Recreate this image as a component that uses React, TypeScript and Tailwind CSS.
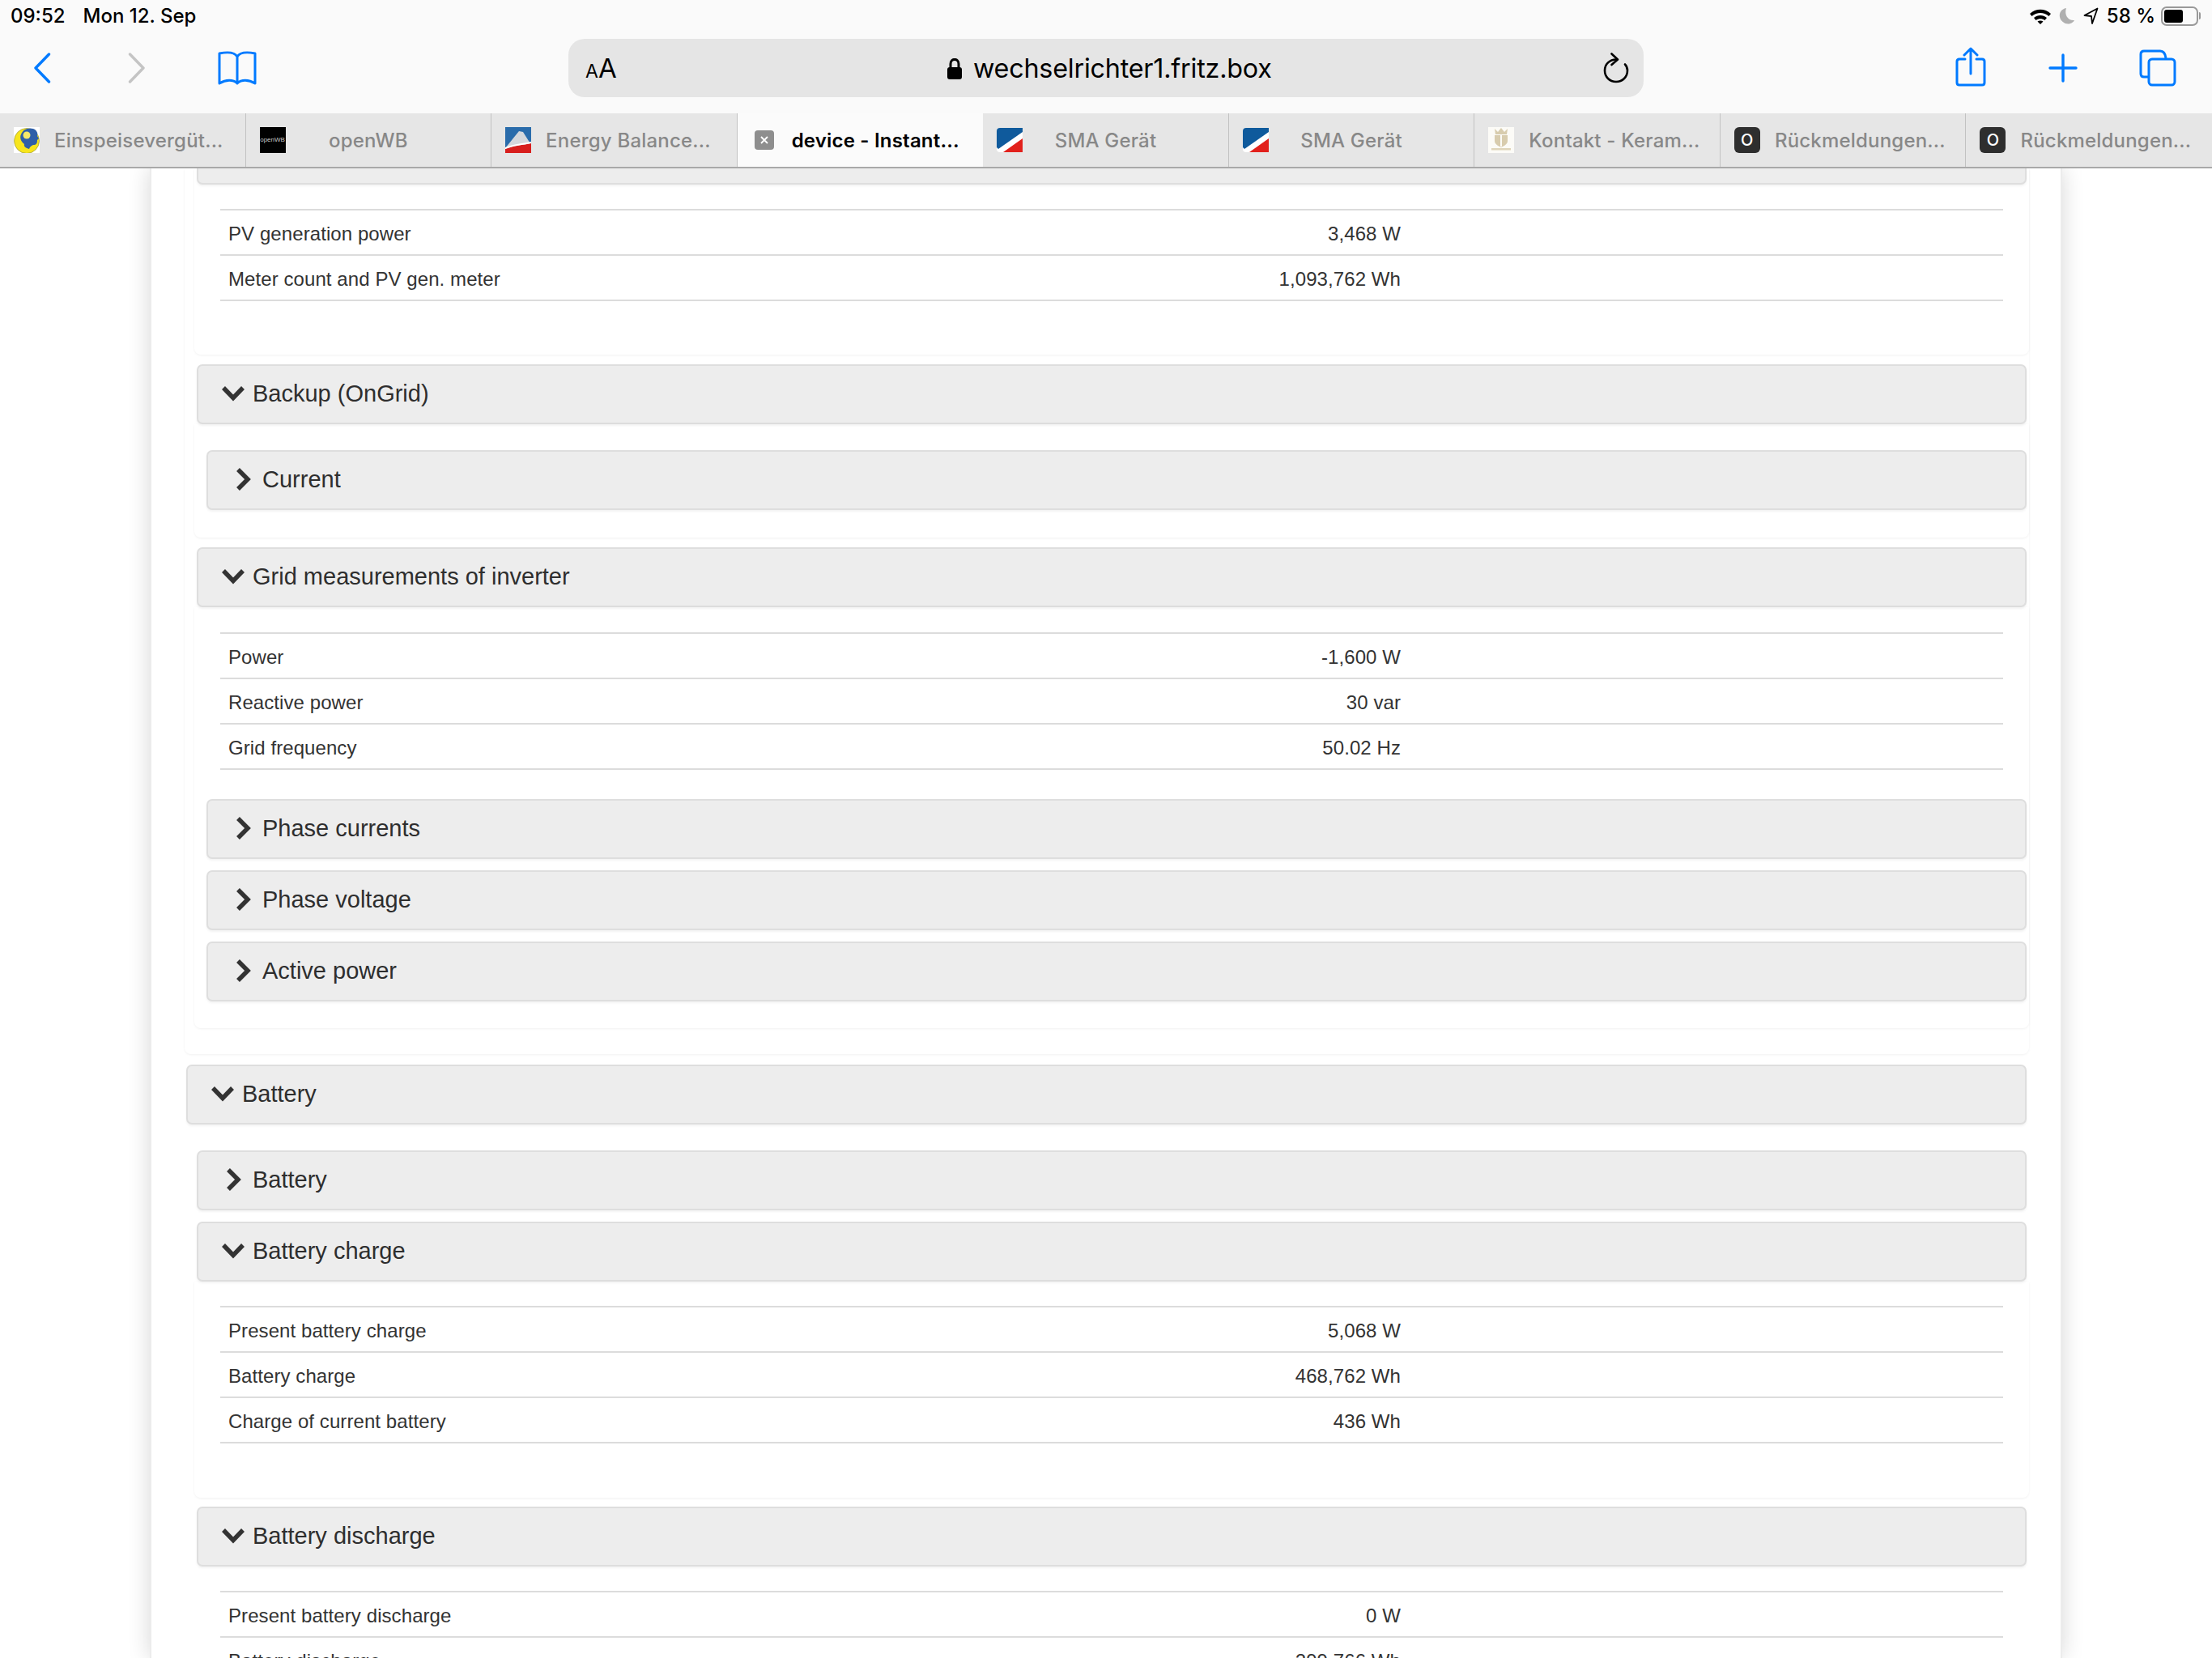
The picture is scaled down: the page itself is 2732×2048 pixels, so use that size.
import { ReactNode } from 'react'

const tabs = [
  { title: 'Einspeisevergüt...', icon: 'sun' },
  { title: 'openWB', icon: 'wb' },
  { title: 'Energy Balance...', icon: 'peak' },
  { title: 'device - Instant...', icon: 'close', active: true },
  { title: 'SMA Gerät', icon: 'sma' },
  { title: 'SMA Gerät', icon: 'sma' },
  { title: 'Kontakt - Keram...', icon: 'keramik' },
  { title: 'Rückmeldungen...', icon: 'o' },
  { title: 'Rückmeldungen...', icon: 'o' },
]

const TabIcon = ({ icon }: { icon: string }) => {
  if (icon === 'sun') {
    return (
      <svg width="32" height="32" viewBox="0 0 32 32" className="block">
        <rect width="32" height="32" fill="#fff" />
        <circle cx="16" cy="17" r="15.5" fill="#f7e51c" stroke="#8a8a40" strokeWidth="0.6" />
        <path d="M9 9 C11 3 18 0 24 2 C29 4 30 8 29 11 L31 14 L29 16 C29 20 28 22 24 22 C22 23 20 24 19 27 C15 26 12 24 13 21 C9 18 7 13 9 9 Z" fill="#2f5fa8" />
        <circle cx="16" cy="10" r="4.5" fill="#f6e96a" />
      </svg>
    )
  }
  if (icon === 'wb') {
    return (
      <div className="w-[32px] h-[32px] bg-black text-[#c8c8c8] text-[8px] leading-[32px] text-center font-['Liberation_Sans',sans-serif] tracking-normal">
        openWB
      </div>
    )
  }
  if (icon === 'peak') {
    return (
      <svg width="32" height="32" viewBox="0 0 32 32" className="block">
        <rect width="32" height="32" fill="#2a6cab" />
        <path d="M0 26 L17 5 L22 6 L32 22 L32 32 L0 32 Z" fill="#d5d8dc" />
        <path d="M0 27 C10 23 22 22 32 20 L32 32 L0 32 Z" fill="#d81f1d" />
        <path d="M0 25 C10 21 22 20 32 18 L32 20 C22 22 10 23 0 27 Z" fill="#fff" />
      </svg>
    )
  }
  if (icon === 'close') {
    return (
      <div className="mx-[4px] w-[24px] h-[24px] rounded-[4px] bg-[#8e8e8e] flex items-center justify-center">
        <svg width="12" height="12" viewBox="0 0 12 12">
          <path d="M2 2 L10 10 M10 2 L2 10" stroke="#fff" strokeWidth="1.8" />
        </svg>
      </div>
    )
  }
  if (icon === 'sma') {
    return (
      <svg width="32" height="30" viewBox="0 0 32 30" className="block">
        <path d="M4 0 H32 V30 H4 Q0 30 0 26 V4 Q0 0 4 0 Z" fill="#fff" />
        <path d="M4 0 H32 V5 L2 26 L0 24 V4 Q0 0 4 0 Z" fill="#0f5a9c" />
        <path d="M32 13 V30 H8 Z" fill="#e2211c" />
      </svg>
    )
  }
  if (icon === 'keramik') {
    return (
      <svg width="32" height="32" viewBox="0 0 32 32" className="block">
        <rect width="32" height="32" fill="#fcfbf7" />
        <path d="M8 2 L12 6 L16 1 L20 6 L24 2 L23 9 H9 Z" fill="#d8ccae" />
        <path d="M8 10 H24 V17 C24 21 20 23 16 25 C12 23 8 21 8 17 Z" fill="#d8ccae" />
        <path d="M15 10 H17 V24 H15 Z" fill="#fcfbf7" />
        <rect x="4" y="26" width="24" height="2.5" fill="#dfd5bb" />
      </svg>
    )
  }
  return (
    <div className="w-[32px] h-[32px] rounded-[6px] bg-[#2e2e2e] text-white text-[20px] leading-[32px] text-center font-['Inter',sans-serif]">
      O
    </div>
  )
}

const StatusBar = () => (
  <div className="h-[48px] flex items-start justify-between pl-[13px] pr-[14px] pt-[5px] text-black font-['Inter',sans-serif] text-[24px] leading-[29px]">
    <div className="flex gap-[22px] font-medium">
      <span>09:52</span>
      <span>Mon 12. Sep</span>
    </div>
    <div className="flex items-center font-medium">
      <svg width="28" height="20" viewBox="0 0 28 20">
        <path d="M1 7 C8 0 20 0 27 7 L24.5 10 C18.5 4.5 9.5 4.5 3.5 10 Z M6 12 C10.5 8 17.5 8 22 12 L19.5 15 C16.5 12.5 11.5 12.5 8.500 15 Z M10.500 16.500 C12.500 15 15.500 15 17.500 16.500 L14 20 Z" fill="#000" />
      </svg>
      <svg width="20" height="22" viewBox="0 0 20 22" className="ml-[9px]">
        <path d="M9 1 C3 2 0 7 1 12 C2 18 9 22 14 20 C16 19.500 18 18 19 16 C12 17 6 10 9 1 Z" fill="#b0b0b0" />
      </svg>
      <svg width="19" height="22" viewBox="0 0 19 22" className="ml-[10px]">
        <path d="M17.500 1.500 L1.500 10 L10 11 L11 20 Z" fill="none" stroke="#000" strokeWidth="1.800" strokeLinejoin="round" />
      </svg>
      <span className="ml-[10px]">58 %</span>
      <div className="ml-[7px] w-[46px] h-[24px] rounded-[7px] border-2 border-[#999999] p-[2px]">
        <div className="w-[23px] h-full rounded-[3px] bg-black" />
      </div>
      <div className="ml-[1px] w-[2px] h-[9px] rounded-r-[2px] bg-[#999999]" />
    </div>
  </div>
)

const Toolbar = () => (
  <div className="h-[72px] flex items-center">
    <svg width="22" height="38" viewBox="0 0 22 38" className="ml-[41px]" fill="none" stroke="#007aff" strokeWidth="3.400" strokeLinecap="round" strokeLinejoin="round">
      <path d="M19.500 2 L3 19 L19.500 36" />
    </svg>
    <svg width="22" height="38" viewBox="0 0 22 38" className="ml-[95px]" fill="none" stroke="#c4c4c4" strokeWidth="3.400" strokeLinecap="round" strokeLinejoin="round">
      <path d="M2.500 2 L19 19 L2.500 36" />
    </svg>
    <svg width="48" height="42" viewBox="0 0 48 42" className="ml-[89px]" fill="none" stroke="#007aff" strokeWidth="3" strokeLinejoin="round">
      <path d="M24 7 C21 2 12 1 2 3 V40 C10 35 19 35 24 40 C29 35 38 35 46 40 V3 C36 1 27 2 24 7 Z M24 7 V40" />
    </svg>
    <div className="ml-[385px] w-[1328px] h-[72px] rounded-[20px] bg-[#e5e5e5] flex items-center justify-between pl-[21px] pr-[18px] text-black font-['Inter',sans-serif]">
      <div className="flex items-baseline font-normal pt-[2px]">
        <span className="text-[23px]">A</span>
        <span className="text-[33px]">A</span>
      </div>
      <div className="flex items-center gap-[13px] text-[32.300px] tracking-[-0.2px] pt-[1px] -ml-[2px]">
        <svg width="20" height="26" viewBox="0 0 20 26">
          <path d="M5 12 V7 C5 -0.500 15 -0.500 15 7 V12" fill="none" stroke="#000" strokeWidth="3" />
          <rect x="1" y="11" width="18" height="15" rx="3" fill="#000" />
        </svg>
        <span className="pt-[2px]">wechselrichter1.fritz.box</span>
      </div>
      <svg width="32" height="38" viewBox="0 0 32 38" fill="none" stroke="#000" strokeWidth="2.600" strokeLinecap="round" strokeLinejoin="round">
        <path d="M16 8.500 C8 8.500 2 14.500 2 22 C2 30 8 36 16 36 C24 36 30 30 30 22 C30 19 29 16.500 27 14.500" />
        <path d="M10.500 1.500 L18 8.500 L10.500 15" />
      </svg>
    </div>
    <svg width="38" height="50" viewBox="0 0 38 50" className="ml-[385px] -mt-[2px]" fill="none" stroke="#007aff" strokeWidth="3" strokeLinecap="round" strokeLinejoin="round">
      <path d="M12 15 H5 Q2 15 2 18 V44 Q2 47 5 47 H33 Q36 47 36 44 V18 Q36 15 33 15 H26" />
      <path d="M19 33 V3 M11 10 L19 2 L27 10" />
    </svg>
    <svg width="36" height="36" viewBox="0 0 36 36" className="ml-[77px]" fill="none" stroke="#007aff" strokeWidth="3.400" strokeLinecap="round">
      <path d="M18 2 V34 M2 18 H34" />
    </svg>
    <svg width="46" height="46" viewBox="0 0 46 46" className="ml-[76px]" fill="none" stroke="#007aff" strokeWidth="3" strokeLinejoin="round">
      <path d="M11 34 H6 Q2 34 2 30 V6 Q2 2 6 2 H26 Q32 2 33 11" />
      <rect x="12" y="12" width="32" height="32" rx="4" />
    </svg>
  </div>
)

const TabBar = () => (
  <div className="h-[68px] grid grid-cols-9 bg-[#e6e6e6] border-b-2 border-[#a9a9a9] font-['Inter',sans-serif] text-[24px] tracking-[0.2px]">
    {tabs.map((tab, i) => (
      <div
        key={i}
        className={
          tab.active
            ? 'grid grid-cols-[1fr_auto_1fr] items-center bg-[#fbfbfb] text-black font-semibold'
            : 'grid grid-cols-[1fr_auto_1fr] items-center border-r border-[#c2c2c2] last:border-r-0 text-[#888888] font-medium'
        }
      >
        <div className="pl-[17px] pr-[18px]">
          <TabIcon icon={tab.icon} />
        </div>
        <span className="whitespace-nowrap pt-[2px]">{tab.title}</span>
        <div />
      </div>
    ))}
  </div>
)

const Chevron = ({ open }: { open: boolean }) =>
  open ? (
    <svg width="28" height="20" viewBox="0 0 28 20" className="mr-[10px] -mt-[3px]" fill="none" stroke="#333333" strokeWidth="5.500">
      <path d="M2 3 L14 15.500 L26 3" />
    </svg>
  ) : (
    <svg width="19" height="28" viewBox="0 0 19 28" className="ml-[5px] mr-[14px] -mt-[2px]" fill="none" stroke="#333333" strokeWidth="5.500">
      <path d="M3 2 L15 14 L3 26" />
    </svg>
  )

const Header = ({ title, open, className }: { title: string; open: boolean; className: string }) => (
  <div className={`h-[74px] pl-[29px] flex items-center rounded-[7px] border-2 border-[#dedede] bg-[#ededed] text-[#2e2e2e] text-[29px] shadow-[0_2px_3px_rgba(0,0,0,0.05)] ${className}`}>
    <Chevron open={open} />
    <span>{title}</span>
  </div>
)

const Panel = ({ children, className }: { children: ReactNode; className: string }) => (
  <div className={`rounded-b-[8px] shadow-[0_1px_3px_rgba(0,0,0,0.06)] ${className}`}>{children}</div>
)

const Rows = ({ rows }: { rows: string[][] }) => (
  <div className="mx-[32px] border-t-2 border-[#dcdcdc] text-[24px] tracking-[0.08px] text-[#333333]">
    {rows.map(([label, value]) => (
      <div key={label} className="h-[56px] border-b-2 border-[#dcdcdc]">
        <div className="w-[1468px] h-full px-[10px] pt-[3px] flex items-center justify-between">
          <span>{label}</span>
          <span>{value}</span>
        </div>
      </div>
    ))}
  </div>
)

export default function App() {
  return (
    <div className="w-[2732px] h-[2048px] flex flex-col overflow-hidden bg-white font-['Liberation_Sans',Arial,sans-serif]">
      <div className="bg-[#fafafa] h-[140px]">
        <StatusBar />
        <Toolbar />
      </div>
      <TabBar />
      <main className="flex-1 min-h-0 overflow-hidden bg-white">
        <div className="ml-[185px] w-[2362px] h-full pl-[41px] pr-[39px] border-x-2 border-[#ececec] shadow-[0_0_26px_rgba(0,0,0,0.16)]">
          <Panel className="pl-[12px] pb-[32px]">
            <Panel className="pb-[66px]">
              <div className="h-[20px] mx-[3px] rounded-b-[7px] border-b-2 border-x-2 border-[#dedede] bg-[#ededed] shadow-[0_2px_3px_rgba(0,0,0,0.05)]" />
              <div className="mt-[30px]">
                <Rows
                  rows={[
                    ['PV generation power', '3,468 W'],
                    ['Meter count and PV gen. meter', '1,093,762 Wh'],
                  ]}
                />
              </div>
            </Panel>
            <Header title="Backup (OnGrid)" open className="mt-[12px] mx-[3px]" />
            <Panel className="pt-[32px] pb-[34px]">
              <Header title="Current" open={false} className="ml-[15px] mr-[3px]" />
            </Panel>
            <Header title="Grid measurements of inverter" open className="mt-[12px] mx-[3px]" />
            <Panel className="pt-[31px] pb-[33px]">
              <Rows
                rows={[
                  ['Power', '-1,600 W'],
                  ['Reactive power', '30 var'],
                  ['Grid frequency', '50.02 Hz'],
                ]}
              />
              <Header title="Phase currents" open={false} className="mt-[36px] ml-[15px] mr-[3px]" />
              <Header title="Phase voltage" open={false} className="mt-[14px] ml-[15px] mr-[3px]" />
              <Header title="Active power" open={false} className="mt-[14px] ml-[15px] mr-[3px]" />
            </Panel>
          </Panel>
          <Header title="Battery" open className="mt-[13px] ml-[2px] mr-[3px]" />
          <div className="pl-[12px] pt-[32px]">
            <Header title="Battery" open={false} className="mx-[3px]" />
            <Header title="Battery charge" open className="mt-[14px] mx-[3px]" />
            <Panel className="pt-[30px] pb-[67px]">
              <Rows
                rows={[
                  ['Present battery charge', '5,068 W'],
                  ['Battery charge', '468,762 Wh'],
                  ['Charge of current battery', '436 Wh'],
                ]}
              />
            </Panel>
            <Header title="Battery discharge" open className="mt-[11px] mx-[3px]" />
            <div className="pt-[30px]">
              <Rows
                rows={[
                  ['Present battery discharge', '0 W'],
                  ['Battery discharge', '299,766 Wh'],
                ]}
              />
            </div>
          </div>
        </div>
      </main>
    </div>
  )
}
